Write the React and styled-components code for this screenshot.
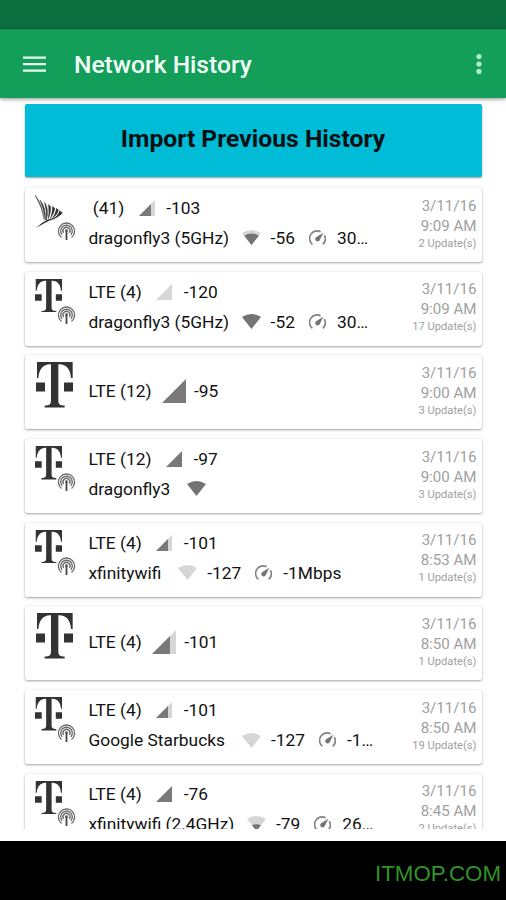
import React from "react";
import styled, { createGlobalStyle } from "styled-components";

const GlobalStyle = createGlobalStyle`
  * { box-sizing: border-box; }
  body { margin: 0; background: #fff; font-family: Roboto, sans-serif; overflow: hidden; }
`;

const Screen = styled.div`
  width: 506px;
  height: 900px;
  display: flex;
  flex-direction: column;
  background: #fff;
`;

const StatusBar = styled.div`
  height: 29px;
  flex: none;
  background: #0b6e3e;
`;

const Toolbar = styled.header`
  height: 69px;
  flex: none;
  display: flex;
  align-items: center;
  padding: 0 24px 0 23px;
  background: #139f5a;
  border-top: 1px solid #118d50;
  box-shadow: 0 1px 4px rgba(0, 0, 0, 0.45);
  z-index: 1;
`;

const Title = styled.h1`
  flex: 1;
  margin: 2px 0 0 28px;
  font-size: 24.6px;
  line-height: 32px;
  font-weight: 500;
  color: #f2fff8;
`;

const Content = styled.main`
  height: 731px;
  flex: none;
  margin-bottom: 12px;
  padding: 5.5px 24.5px 0;
  overflow: hidden;
`;

const ImportButton = styled.button`
  display: block;
  width: 100%;
  height: 73.5px;
  margin: 0 0 11px;
  padding: 0 0 4px;
  border: 0;
  border-radius: 2px;
  background: #00bcd6;
  box-shadow: 0 1px 2px rgba(0, 0, 0, 0.4);
  font: 700 24.7px Roboto, sans-serif;
  color: #071012;
`;

const List = styled.div`
  display: flex;
  flex-direction: column;
  gap: 9.7px;
`;

const Card = styled.article`
  height: 74px;
  flex: none;
  display: flex;
  border-radius: 2.5px;
  background: #fff;
  box-shadow: 0 1px 2.5px rgba(0, 0, 0, 0.36), 0 0 1px rgba(0, 0, 0, 0.12);
`;

const CarrierBox = styled.div`
  width: 64px;
  flex: none;
  padding: ${(p) => (p.$large ? "7px 0 0 11px" : "7px 0 0 10px")};
  position: relative;
`;

const TowerBadge = styled.div`
  position: absolute;
  left: 32px;
  top: 33px;
  line-height: 0;
`;

const Details = styled.div`
  flex: 1;
  display: flex;
  flex-direction: column;
  padding-top: ${(p) => (p.$large ? "20.6px" : "5.5px")};
`;

const Line = styled.div`
  height: 29.6px;
  display: flex;
  align-items: center;
  font-size: 17.35px;
  line-height: 20px;
  color: #111;
  white-space: pre;
`;

const IconSlot = styled.span`
  display: flex;
  margin: ${(p) => p.$margin};
`;

const Meta = styled.div`
  flex: none;
  padding: 7.5px 5px 0 0;
  text-align: right;
  color: #a0a0a0;
  font-size: 15.1px;
  line-height: 20px;
`;

const Updates = styled.div`
  font-size: 11.2px;
  line-height: 15px;
`;

const Footer = styled.footer`
  flex: 1;
  display: flex;
  align-items: center;
  justify-content: flex-end;
  padding: 7px 5px 0 0;
  background: #000;
  color: #329328;
  font: 22.3px "Liberation Sans", sans-serif;
`;

const MenuIcon = () => (
  <svg width="23" height="17" viewBox="0 0 23 17" fill="#e9fff3">
    <path d="M0 .5h23v2.3H0zM0 7h23v2.3H0zM0 13.5h23v2.3H0z" />
  </svg>
);

const MoreIcon = () => (
  <svg width="6" height="22" viewBox="0 0 6 22" fill="#b1edcc">
    <circle cx="3" cy="3.6" r="2.6" />
    <circle cx="3" cy="11" r="2.6" />
    <circle cx="3" cy="18.4" r="2.6" />
  </svg>
);

const TMobile = ({ large }) => (
  <svg width={large ? 37 : 27.5} height={large ? 45.5 : 33.5} viewBox="0 0 111 137" preserveAspectRatio="none" fill="#333">
    <path d="M3 0H110V48H105C103 22 91 7 70 7H67V115C67 128 72 131 86 131V137H26V131C40 131 45 128 45 115V7H42C22 7 9 22 7 48H3Z" />
    <path d="M0 62H27V89H0zM84 62H111V89H84z" />
  </svg>
);

const Sprint = () => (
  <svg width="28" height="34" viewBox="0 0 84 102" fill="#333">
    <path d="M0 0Q20 24 28 74Q22 38 0 0Z" stroke="#444" strokeWidth="1.5" />
    <path d="M15 15Q33 36 31 75Q27 44 15 15Z" stroke="#444" strokeWidth="1.5" />
    <path d="M29 22Q43 44 34 76Q36 50 29 22Z" stroke="#333" strokeWidth="1.5" />
    <path d="M40 27L47 34Q50 52 38 77Q43 54 40 27Z" />
    <path d="M52 33L60 40Q59 55 42 77Q52 58 52 33Z" />
    <path d="M64 39L71 45Q68 60 46 77Q61 60 64 39Z" />
    <path d="M74 46L83 54Q72 66 50 76Q69 63 74 46Z" />
    <path d="M3 99Q20 83 34 76L72 64Q34 80 3 99Z" />
  </svg>
);

const Tower = () => (
  <svg width="19" height="20" viewBox="0 0 19 20" fill="none" stroke="#686868" strokeWidth="1.35">
    <path d="M4.5 16.5A8.1 8.1 0 1 1 14.5 16.5" />
    <path d="M5.2 13.9A5.8 5.8 0 1 1 13.8 13.9" />
    <path d="M6.6 11.8A3.5 3.5 0 1 1 12.4 11.8" />
    <path d="M9.5 10V19" stroke="#444" strokeWidth="1.8" />
    <circle cx="9.5" cy="9.7" r="1.4" fill="#555" stroke="none" />
  </svg>
);

const Signal = ({ size, level }) => (
  <svg width={size} height={size} viewBox="0 0 24 24">
    <path d="M0 24H24V0Z" fill={level === "full" ? "#7a7879" : "#d6d6d6"} />
    {level === "mid" && <path d="M0 24H18V6Z" fill="#7a7879" />}
  </svg>
);

const Wifi = ({ level }) => (
  <svg width="19" height="15" viewBox="0 0 19 15">
    <path d="M0 3Q9.5-3 19 3L9.5 15Z" fill={level === 4 ? "#747273" : "#d6d6d6"} />
    {level === 3 && <path d="M2.2 5.7Q9.5 1.4 16.8 5.7L9.5 15Z" fill="#747273" />}
    {level === 1 && <path d="M5 9.3Q9.5 7 14 9.3L9.5 15Z" fill="#747273" />}
  </svg>
);

const Gauge = () => (
  <svg width="17" height="16" viewBox="0 0 17 16">
    <path d="M3.4 14.4A7.6 7.6 0 0 1 11.6 1.7M15.3 5.2A7.6 7.6 0 0 1 13.8 14.4" fill="none" stroke="#828282" strokeWidth="1.6" />
    <path d="M14.4 2.7L10.9 9.8A2.4 2.4 0 1 1 7.1 7.2Z" fill="#747474" />
  </svg>
);

const history = [
  { carrier: "sprint", net: " (41)", level: "mid", dbm: "-103", wifi: "dragonfly3 (5GHz)", wifiLevel: 3, wifiDbm: "-56", speed: "30…", time: "9:09 AM", updates: 2 },
  { net: "LTE (4)", level: "none", dbm: "-120", wifi: "dragonfly3 (5GHz)", wifiLevel: 4, wifiDbm: "-52", speed: "30…", time: "9:09 AM", updates: 17 },
  { net: "LTE (12)", level: "full", dbm: "-95", time: "9:00 AM", updates: 3 },
  { net: "LTE (12)", level: "full", dbm: "-97", wifi: "dragonfly3", wifiLevel: 4, time: "9:00 AM", updates: 3 },
  { net: "LTE (4)", level: "mid", dbm: "-101", wifi: "xfinitywifi", wifiLevel: 0, wifiDbm: "-127", speed: "-1Mbps", time: "8:53 AM", updates: 1 },
  { net: "LTE (4)", level: "mid", dbm: "-101", time: "8:50 AM", updates: 1 },
  { net: "LTE (4)", level: "mid", dbm: "-101", wifi: "Google Starbucks", wifiLevel: 0, wifiDbm: "-127", speed: "-1…", time: "8:50 AM", updates: 19 },
  { net: "LTE (4)", level: "full", dbm: "-76", wifi: "xfinitywifi (2.4GHz)", wifiLevel: 1, wifiDbm: "-79", speed: "26…", time: "8:45 AM", updates: 2 },
];

function HistoryCard({ item }) {
  const large = !item.wifi;
  const hasBand = item.wifi?.endsWith(")");
  return (
    <Card>
      <CarrierBox $large={large}>
        {item.carrier === "sprint" ? <Sprint /> : <TMobile large={large} />}
        {!large && <TowerBadge><Tower /></TowerBadge>}
      </CarrierBox>
      <Details $large={large}>
        <Line>
          {item.net}
          <IconSlot $margin={large ? "0 8px 0 10.5px" : "0 11.5px 0 14.5px"}>
            <Signal size={large ? 24 : 16} level={item.level} />
          </IconSlot>
          {item.dbm}
        </Line>
        {item.wifi && (
          <Line>
            {item.wifi}
            <IconSlot $margin={hasBand ? "0 10px 0 12.5px" : "0 10px 0 17px"}>
              <Wifi level={item.wifiLevel} />
            </IconSlot>
            {item.wifiDbm}
            {item.speed && <IconSlot $margin="0 11px 0 14px"><Gauge /></IconSlot>}
            {item.speed}
          </Line>
        )}
      </Details>
      <Meta>
        <div>3/11/16</div>
        <div>{item.time}</div>
        <Updates>{item.updates} Update(s)</Updates>
      </Meta>
    </Card>
  );
}

export default function App() {
  return (
    <>
      <GlobalStyle />
      <Screen>
        <StatusBar />
        <Toolbar>
          <MenuIcon />
          <Title>Network History</Title>
          <MoreIcon />
        </Toolbar>
        <Content>
          <ImportButton>Import Previous History</ImportButton>
          <List>
            {history.map((item, i) => <HistoryCard key={i} item={item} />)}
          </List>
        </Content>
        <Footer>ITMOP.COM</Footer>
      </Screen>
    </>
  );
}
